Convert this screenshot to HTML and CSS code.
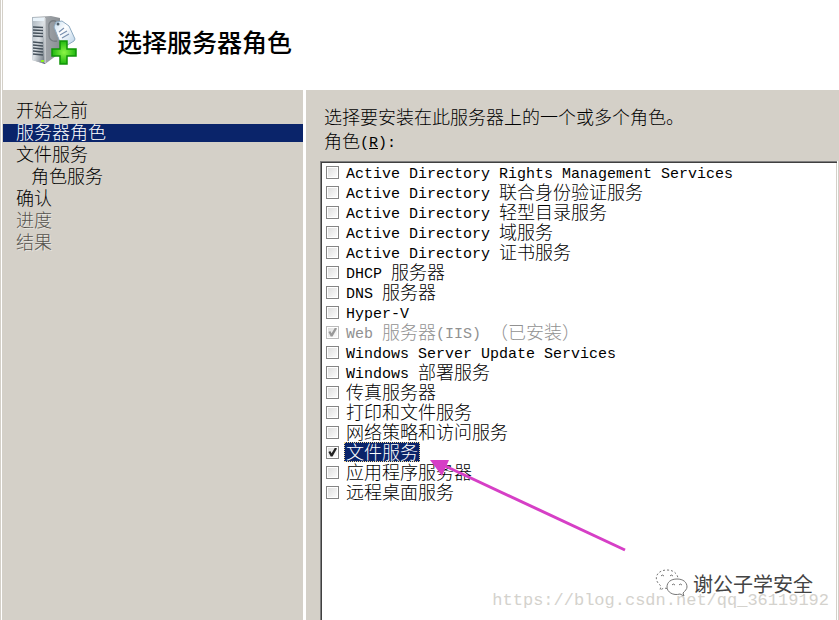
FILE: index.html
```html
<!DOCTYPE html>
<html lang="zh-CN">
<head>
<meta charset="utf-8">
<title>选择服务器角色</title>
<link rel="stylesheet" href="styles.css">
</head>
<body>
<div class="wizard">
  <header class="header">
    <svg class="server-icon" viewBox="0 0 48 52" aria-hidden="true">
      <defs>
        <linearGradient id="front" x1="0" y1="0" x2="1" y2="1"><stop offset="0" stop-color="#a9b4bd"/><stop offset=".5" stop-color="#dde2e6"/><stop offset="1" stop-color="#606a73"/></linearGradient>
        <linearGradient id="side" x1="0" y1="0" x2="1" y2="0"><stop offset="0" stop-color="#b5b9bd"/><stop offset="1" stop-color="#8a8f94"/></linearGradient>
        <linearGradient id="tag" x1="0" y1="0" x2="1" y2="1"><stop offset="0" stop-color="#c3dcf0"/><stop offset=".4" stop-color="#fff"/><stop offset="1" stop-color="#b4cfe6"/></linearGradient>
        <radialGradient id="plus"><stop offset="0" stop-color="#8cf545"/><stop offset="1" stop-color="#1fb80f"/></radialGradient>
      </defs>
      <path d="M2 2 21 1 30 3 30 38 15 49 2 45Z" fill="url(#side)"/>
      <path d="M2 2H15V49L2 45Z" fill="url(#front)"/>
      <path d="M15 3V48" stroke="#e4e7e9"/>
      <path d="M3 3H14V6H3Z" fill="#e9f3fa"/>
      <path d="M3 12l10 .5M3 15l10 .5M3 18l10 .5M3 21l10 .5M3 27l10 1M3 30l10 1M3 33l10 1M3 36l10 1M3 39l10 1" stroke="#46515b" stroke-width="1.5"/>
      <rect x="11" y="45" width="3" height="2" fill="#8cf51c"/>
      <path d="M27 7C22 4 18 7 19 13V20C19 25 23 27 27 26" fill="none" stroke="#777d82" stroke-width="1.3"/>
      <path d="M24 12 26 7 32 6 39 11 45 24 44 26 34 32 30 27Z" fill="url(#tag)" stroke="#8eaac1" stroke-linejoin="round"/>
      <circle cx="28" cy="9" r="1.500" fill="#50606c"/>
      <path d="M29 17 34 13M30 20 37 16M32 23 39 19" stroke="#7990b0" stroke-width="1.2"/>
      <path d="M30 26h7v8h9v7h-9v8h-7v-8h-8v-7h8z" fill="url(#plus)" stroke="#129409" stroke-width="1.5"/>
    </svg>
    <h1 class="title">选择服务器角色</h1>
  </header>
  <div class="body">
    <nav class="steps" aria-label="步骤">
      <a class="step" href="#">开始之前</a>
      <a class="step current" href="#" aria-current="step">服务器角色</a>
      <a class="step" href="#">文件服务</a>
      <a class="step sub" href="#">角色服务</a>
      <a class="step" href="#">确认</a>
      <a class="step pending" aria-disabled="true">进度</a>
      <a class="step pending" aria-disabled="true">结果</a>
    </nav>
    <main class="content">
      <p class="line">选择要安装在此服务器上的一个或多个角色。</p>
      <p class="line" id="roles-label">角色<span class="en">(<u>R</u>):</span></p>
      <div class="roles" role="group" aria-labelledby="roles-label">
        <label class="role"><input type="checkbox"><span class="name"><span class="en">Active Directory Rights Management Services</span></span></label>
        <label class="role"><input type="checkbox"><span class="name"><span class="en">Active Directory </span>联合身份验证服务</span></label>
        <label class="role"><input type="checkbox"><span class="name"><span class="en">Active Directory </span>轻型目录服务</span></label>
        <label class="role"><input type="checkbox"><span class="name"><span class="en">Active Directory </span>域服务</span></label>
        <label class="role"><input type="checkbox"><span class="name"><span class="en">Active Directory </span>证书服务</span></label>
        <label class="role"><input type="checkbox"><span class="name"><span class="en">DHCP </span>服务器</span></label>
        <label class="role"><input type="checkbox"><span class="name"><span class="en">DNS </span>服务器</span></label>
        <label class="role"><input type="checkbox"><span class="name"><span class="en">Hyper-V</span></span></label>
        <label class="role"><input type="checkbox" checked disabled><span class="name"><span class="en">Web </span>服务器<span class="en">(IIS) </span>（已安装）</span></label>
        <label class="role"><input type="checkbox"><span class="name"><span class="en">Windows Server Update Services</span></span></label>
        <label class="role"><input type="checkbox"><span class="name"><span class="en">Windows </span>部署服务</span></label>
        <label class="role"><input type="checkbox"><span class="name">传真服务器</span></label>
        <label class="role"><input type="checkbox"><span class="name">打印和文件服务</span></label>
        <label class="role"><input type="checkbox"><span class="name">网络策略和访问服务</span></label>
        <label class="role selected"><input type="checkbox" checked><span class="name">文件服务</span>
          <svg class="arrow" viewBox="0 0 200 96" aria-hidden="true"><path d="M14 7 196 92" stroke="#d63fc6" stroke-width="3"/><path d="M1 2H20L13 18Z" fill="#d63fc6"/></svg>
        </label>
        <label class="role"><input type="checkbox"><span class="name">应用程序服务器</span></label>
        <label class="role"><input type="checkbox"><span class="name">远程桌面服务</span></label>
      </div>
    </main>
  </div>
  <div class="watermark">
    <div class="account">
      <svg class="wechat" viewBox="0 0 34 30" aria-hidden="true"><g fill="#fff" stroke="#777" stroke-width="1"><path stroke-dasharray="2 2" d="M12 19.500 9 19 5 21 6 17C-3 10 2 1 12 1 18 1 22 4 23 9"/><path d="M28 24 29 27 25 25C18 27 12 23 12 18 12 13 16 10 22 10 28 10 32 13 32 18 32 20 30 22 28 24Z"/></g><path d="M6 7q1-2 3 0M15 7q1-2 3 0M17 16q1-2 3 0M24 16q1-2 3 0" fill="none" stroke="#777"/></svg>
      <span>谢公子学安全</span>
    </div>
    <span class="url">https://blog.csdn.net/qq_36119192</span>
  </div>
</div>
</body>
</html>
```
FILE: styles.css
```css
* { box-sizing: border-box; }

body {
  margin: 0;
  background: #d4d0c8;
  color: #000;
  font: 300 18px/20px "Noto Sans CJK SC", sans-serif;
}

.wizard {
  position: relative;
  display: flex;
  flex-direction: column;
  min-height: 100vh;
  border-left: 1px solid #d4d0c8;
}

.header {
  display: flex;
  align-items: center;
  gap: 39px;
  height: 90px;
  margin-left: 2px;
  padding: 0 27px 8px;
  background: #fff;
}

.server-icon { width: 48px; height: 52px; }

.title {
  margin: 0;
  font-size: 25px;
  font-weight: 500;
  line-height: 32px;
}

.wizard::before {
  content: "";
  position: absolute;
  inset: 0 auto 0 0;
  width: 1px;
  background: #fff;
}

.body { display: flex; flex: 1; margin-left: 2px; }

.steps {
  display: flex;
  flex-direction: column;
  gap: 4px;
  width: 303px;
  flex: none;
  padding-top: 12px;
  border-right: 3px solid #fff;
}

.step {
  height: 18px;
  padding-left: 13px;
  color: #000;
  line-height: 14px;
  text-decoration: none;
}

.step.sub { padding-left: 28px; }
.step.current { background: #0a246a; color: #fff; }
.step.pending { color: #55524c; text-shadow: 1px 1px #e8e6e1; }

.content {
  display: flex;
  flex: 1;
  flex-direction: column;
  padding: 14px 2px 0 14px;
}

.line { margin: 0; padding-left: 4px; line-height: 24px; }

.en {
  font: 15px/0 "Liberation Mono", monospace;
  vertical-align: 1px;
  white-space: pre;
}

.roles {
  flex: 1;
  margin-top: 9px;
  padding: 0 4px;
  background: #fff;
  border: solid #808080;
  border-width: 1px 0 0 1px;
  box-shadow: inset 1px 1px #404040, inset -1px 0 #d4d0c8, 1px 0 #fff;
}

.role {
  position: relative;
  display: flex;
  align-items: center;
  gap: 5px;
  height: 20px;
}

.role input {
  appearance: none;
  flex: none;
  width: 13px;
  height: 13px;
  margin: 0 0 0 1px;
  border: 1px solid #858585;
  background: linear-gradient(135deg, #dcdcdc, #fff);
  box-shadow: inset 0 0 0 1px #fff;
}

.role input:checked::before {
  content: "";
  display: block;
  width: 9px;
  height: 9px;
  margin: 1px;
  background: #222;
  clip-path: polygon(5% 50%, 25% 40%, 40% 65%, 78% 0, 100% 10%, 50% 100%, 30% 100%);
}

.role input:disabled { border-color: #bbb; }
.role input:disabled::before { background: #999; }
.role input:disabled + .name { color: #919191; }

.name { height: 20px; padding: 0 2px; line-height: 18px; white-space: nowrap; }

.selected .name {
  background: #0a246a;
  color: #fff;
  outline: 1px dotted #f5db95;
  outline-offset: -1px;
}

.arrow {
  position: absolute;
  z-index: 1;
  left: 104px;
  top: 16px;
  width: 200px;
  height: 96px;
}

.watermark {
  position: absolute;
  right: 10px;
  bottom: 9px;
  display: flex;
  flex-direction: column;
  align-items: flex-end;
}

.account {
  display: flex;
  align-items: center;
  gap: 4px;
  margin-right: 16px;
  color: #444;
  font-size: 20px;
  font-weight: 400;
  line-height: 24px;
}

.wechat { width: 34px; height: 30px; }

.url {
  margin-top: -8px;
  color: #d4d2cd;
  font: 17px/20px "Liberation Mono", monospace;
}
```
